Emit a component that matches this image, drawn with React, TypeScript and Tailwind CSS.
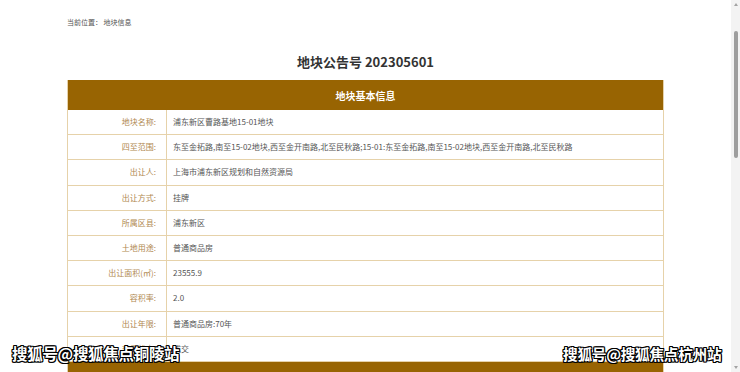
import React from 'react';

const rows: { label: string; value: string }[] = [
  { label: '地块名称:', value: '浦东新区曹路基地15-01地块' },
  {
    label: '四至范围:',
    value:
      '东至金拓路,南至15-02地块,西至金开南路,北至民秋路;15-01:东至金拓路,南至15-02地块,西至金开南路,北至民秋路',
  },
  { label: '出让人:', value: '上海市浦东新区规划和自然资源局' },
  { label: '出让方式:', value: '挂牌' },
  { label: '所属区县:', value: '浦东新区' },
  { label: '土地用途:', value: '普通商品房' },
  { label: '出让面积(㎡):', value: '23555.9' },
  { label: '容积率:', value: '2.0' },
  { label: '出让年限:', value: '普通商品房:70年' },
  { label: '交易状态:', value: '成交' },
];

const font = { fontFamily: '"Noto Sans CJK SC", "Noto Sans", sans-serif' };

function Watermark({ text, className }: { text: string; className: string }) {
  return (
    <div
      className={`absolute font-bold leading-none text-white tracking-[-0.3px] ${className}`}
      style={{
        ...font,
        textShadow:
          '1px 1px 0 #000, -1px -1px 0 #000, 1px -1px 0 #000, -1px 1px 0 #000, 0 1px 0 #000, 1px 0 0 #000, 0 -1px 0 #000, -1px 0 0 #000',
      }}
    >
      {text}
    </div>
  );
}

export default function App() {
  return (
    <div className="relative flex h-[372px] w-[740px] overflow-hidden bg-white" style={font}>
      <div className="flex min-w-0 flex-1 flex-col">
        <div className="mt-[1px] h-[4px] w-full bg-[#9a6504]" />

        <div className="mx-auto flex w-[597px] flex-col">
          <div className="mt-[16px] text-[7px] leading-[10px] text-[#555]">当前位置：&nbsp;地块信息</div>

          <h1 className="mt-[26px] text-center text-[13px] font-bold leading-[18px] text-[#333]">
            地块公告号 202305601
          </h1>

          <div className="mt-[9px] border-x border-[#e6d2aa]">
            <div className="flex h-[30px] items-center justify-center bg-[#986402] text-[10px] font-bold text-white">
              地块基本信息
            </div>
            {rows.map((r) => (
              <div key={r.label} className="flex h-[25.2px] border-b border-[#e6d2aa] text-[8px] leading-none">
                <div className="flex w-[99px] shrink-0 items-center justify-end border-r border-[#e6d2aa] pr-[10px] text-[#b08850]">
                  {r.label}
                </div>
                <div className="flex min-w-0 flex-1 items-center whitespace-nowrap pl-[6px] text-[#555]">
                  {r.value}
                </div>
              </div>
            ))}
            <div className="h-[30px] bg-[#986402]" />
          </div>
        </div>
      </div>

      <div className="flex w-[9px] shrink-0 flex-col items-center bg-[#f3f3f3]">
        <div className="mt-[3px] h-0 w-0 border-x-[2px] border-b-[3px] border-x-transparent border-b-[#a3a3a3]" />
        <div className="mt-[25px] h-[127px] w-[4px] rounded-full bg-[#9e9e9e]" />
        <div className="mt-auto mb-[3px] h-0 w-0 border-x-[2px] border-t-[3px] border-x-transparent border-t-[#a3a3a3]" />
      </div>

      <Watermark text="搜狐号@搜狐焦点铜陵站" className="left-[12px] top-[346px] text-[15.5px]" />
      <Watermark text="搜狐号@搜狐焦点杭州站" className="left-[563px] top-[347px] text-[14.7px]" />
    </div>
  );
}
